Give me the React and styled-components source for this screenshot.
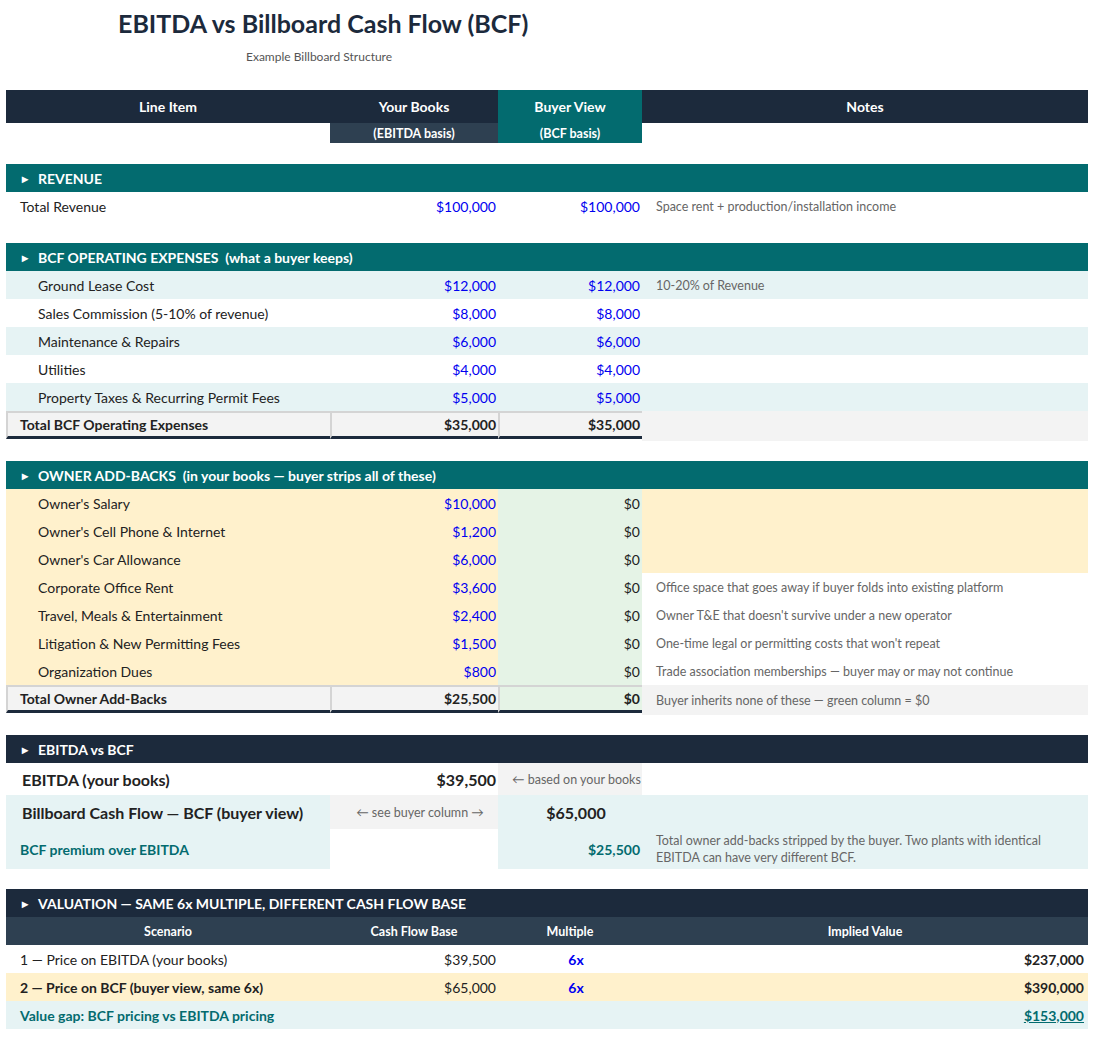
import React from 'react';
import styled, { createGlobalStyle, css } from 'styled-components';

const NAVY = '#1c2a3c';
const TEAL = '#036b6f';
const SLATE = '#2e4051';
const MINT = '#e6f3f4';
const CREAM = '#fff1cc';
const GREEN = '#e5f3e6';
const GRAY = '#f3f3f3';
const BLUE = '#0000f0';

const Global = createGlobalStyle`
  body { margin: 0; background: #fff; font-family: Lato, "Open Sans", sans-serif; color: #222; }
`;

const Page = styled.div`
  width: 1082px;
  padding: 0 8px 0 6px;
`;

const Title = styled.h1`
  margin: 0;
  padding: 8px 0 0 112px;
  font-size: 25px;
  font-weight: 700;
  color: ${NAVY};
  height: 36px;
`;

const Subtitle = styled.div`
  padding-left: 240px;
  font-size: 12px;
  color: #555;
  height: 46px;
  line-height: 26px;
`;

const Grid = styled.div`
  display: grid;
  grid-template-columns: 324px 168px 144px 446px;
  margin-bottom: ${p => p.$gap || 0}px;
`;

const Cell = styled.div`
  height: ${p => p.$h || 28}px;
  display: flex;
  align-items: center;
  justify-content: ${p => p.$align === 'right' ? 'flex-end' : p.$align === 'center' ? 'center' : 'flex-start'};
  padding: 0 ${p => p.$pr ?? 2}px 0 ${p => p.$pl ?? 14}px;
  box-sizing: border-box;
  background: ${p => p.$bg || 'transparent'};
  color: ${p => p.$color || '#222'};
  font-size: ${p => p.$size || 14}px;
  font-weight: ${p => p.$bold ? 700 : 400};
  white-space: nowrap;
  ${p => p.$total && css`
    border-top: 2px solid #d4d4d4;
    border-bottom: 3px solid ${NAVY};
    border-left: 2px solid #d4d4d4;
  `}
`;

const Note = styled(Cell)`
  color: #666;
  font-size: 12.5px;
  padding-left: 14px;
  white-space: ${p => p.$wrap ? 'normal' : 'nowrap'};
  line-height: 17px;
`;

const HeadCell = styled(Cell)`
  color: #fff;
  font-weight: 700;
  justify-content: center;
  padding: 0;
`;

const SectionBar = styled.div`
  height: 28px;
  background: ${p => p.$bg};
  color: #fff;
  font-weight: 700;
  font-size: 14px;
  display: flex;
  align-items: center;
  padding-left: 16px;
  gap: 10px;
  &::before { content: '▸'; font-size: 12px; }
`;

const Spacer = styled.div`
  height: ${p => p.$h}px;
`;

const Underline = styled.span`
  text-decoration: underline;
`;

const bgFor = (kind, col) => {
  if (kind === 'exp') return col === 3 ? 'transparent' : null;
  return null;
};

const expenses = [
  ['Ground Lease Cost', '$12,000', '$12,000', '10-20% of Revenue'],
  ['Sales Commission (5-10% of revenue)', '$8,000', '$8,000', ''],
  ['Maintenance & Repairs', '$6,000', '$6,000', ''],
  ['Utilities', '$4,000', '$4,000', ''],
  ['Property Taxes & Recurring Permit Fees', '$5,000', '$5,000', ''],
];

const addbacks = [
  ["Owner's Salary", '$10,000', ''],
  ["Owner's Cell Phone & Internet", '$1,200', ''],
  ["Owner's Car Allowance", '$6,000', ''],
  ['Corporate Office Rent', '$3,600', 'Office space that goes away if buyer folds into existing platform'],
  ['Travel, Meals & Entertainment', '$2,400', "Owner T&E that doesn't survive under a new operator"],
  ['Litigation & New Permitting Fees', '$1,500', "One-time legal or permitting costs that won't repeat"],
  ['Organization Dues', '$800', 'Trade association memberships — buyer may or may not continue'],
];

export default function App() {
  return (
    <Page>
      <Global />
      <Title>EBITDA vs Billboard Cash Flow (BCF)</Title>
      <Subtitle>Example Billboard Structure</Subtitle>

      <Grid>
        <HeadCell $h={33} $bg={NAVY}>Line Item</HeadCell>
        <HeadCell $h={33} $bg={NAVY}>Your Books</HeadCell>
        <HeadCell $h={33} $bg={TEAL}>Buyer View</HeadCell>
        <HeadCell $h={33} $bg={NAVY}>Notes</HeadCell>
        <Cell $h={20} />
        <HeadCell $h={20} $bg={SLATE} $size={12.5}>(EBITDA basis)</HeadCell>
        <HeadCell $h={20} $bg={TEAL} $size={12.5}>(BCF basis)</HeadCell>
        <Cell $h={20} />
      </Grid>
      <Spacer $h={21} />

      <SectionBar $bg={TEAL}>REVENUE</SectionBar>
      <Grid>
        <Cell>Total Revenue</Cell>
        <Cell $align="right" $color={BLUE}>$100,000</Cell>
        <Cell $align="right" $color={BLUE}>$100,000</Cell>
        <Note>Space rent + production/installation income</Note>
      </Grid>
      <Spacer $h={23} />

      <SectionBar $bg={TEAL}>BCF OPERATING EXPENSES&nbsp; (what a buyer keeps)</SectionBar>
      <Grid>
        {expenses.map(([l, a, b, n], i) => {
          const bg = i % 2 === 0 ? MINT : '#fff';
          return (
            <React.Fragment key={l}>
              <Cell $bg={bg} $pl={32}>{l}</Cell>
              <Cell $bg={bg} $align="right" $color={BLUE}>{a}</Cell>
              <Cell $bg={bg} $align="right" $color={BLUE}>{b}</Cell>
              <Note $bg={bg}>{n}</Note>
            </React.Fragment>
          );
        })}
        <Cell $total $bg={GRAY} $bold $pl={12}>Total BCF Operating Expenses</Cell>
        <Cell $total $bg={GRAY} $bold $align="right">$35,000</Cell>
        <Cell $total $bg={GRAY} $bold $align="right">$35,000</Cell>
        <Note $bg={GRAY} $h={30} />
      </Grid>
      <Spacer $h={20} />

      <SectionBar $bg={TEAL}>OWNER ADD-BACKS&nbsp; (in your books — buyer strips all of these)</SectionBar>
      <Grid>
        {addbacks.map(([l, a, n]) => (
          <React.Fragment key={l}>
            <Cell $bg={CREAM} $pl={32}>{l}</Cell>
            <Cell $bg={CREAM} $align="right" $color={BLUE}>{a}</Cell>
            <Cell $bg={GREEN} $align="right">$0</Cell>
            <Note $bg={n ? '#fff' : CREAM}>{n}</Note>
          </React.Fragment>
        ))}
        <Cell $total $bg={GRAY} $bold $pl={12}>Total Owner Add-Backs</Cell>
        <Cell $total $bg={GRAY} $bold $align="right">$25,500</Cell>
        <Cell $total $bg={GREEN} $bold $align="right">$0</Cell>
        <Note $bg={GRAY} $h={30}>Buyer inherits none of these — green column = $0</Note>
      </Grid>
      <Spacer $h={20} />

      <SectionBar $bg={NAVY}>EBITDA vs BCF</SectionBar>
      <Grid>
        <Cell $h={32} $bold $size={16} $pl={16}>EBITDA (your books)</Cell>
        <Cell $h={32} $bold $size={16} $align="right">$39,500</Cell>
        <Note $h={32} $bg={GRAY} $pl={4} $color="#666">← based on your books</Note>
        <Cell $h={32} />
        <Cell $h={34} $bg={MINT} $bold $size={16} $pl={16}>Billboard Cash Flow — BCF (buyer view)</Cell>
        <Note $h={34} $bg={GRAY} $pl={0} $align="center">← see buyer column →</Note>
        <Cell $h={34} $bg={MINT} $bold $size={16} $align="center">$65,000</Cell>
        <Cell $h={34} $bg={MINT} />
        <Cell $h={40} $bg={MINT} $bold $color={TEAL} $pl={14}>BCF premium over EBITDA</Cell>
        <Cell $h={40} />
        <Cell $h={40} $bg={MINT} $bold $color={TEAL} $align="right">$25,500</Cell>
        <Note $h={40} $bg={MINT} $wrap>Total owner add-backs stripped by the buyer. Two plants with identical EBITDA can have very different BCF.</Note>
      </Grid>
      <Spacer $h={20} />

      <SectionBar $bg={NAVY}>VALUATION — SAME 6x MULTIPLE, DIFFERENT CASH FLOW BASE</SectionBar>
      <Grid>
        <HeadCell $bg={SLATE} $size={12.5}>Scenario</HeadCell>
        <HeadCell $bg={SLATE} $size={12.5}>Cash Flow Base</HeadCell>
        <HeadCell $bg={SLATE} $size={12.5}>Multiple</HeadCell>
        <HeadCell $bg={SLATE} $size={12.5}>Implied Value</HeadCell>

        <Cell>1 — Price on EBITDA (your books)</Cell>
        <Cell $align="right">$39,500</Cell>
        <Cell $align="center" $bold $color={BLUE}>6x</Cell>
        <Cell $align="right" $bold $pr={4}>$237,000</Cell>

        <Cell $bg={CREAM} $bold>2 — Price on BCF (buyer view, same 6x)</Cell>
        <Cell $bg={CREAM} $align="right">$65,000</Cell>
        <Cell $bg={CREAM} $align="center" $bold $color={BLUE}>6x</Cell>
        <Cell $bg={CREAM} $align="right" $bold $pr={4}>$390,000</Cell>

        <Cell $bg={MINT} $bold $color={TEAL}>Value gap: BCF pricing vs EBITDA pricing</Cell>
        <Cell $bg={MINT} />
        <Cell $bg={MINT} />
        <Cell $bg={MINT} $align="right" $bold $pr={4} $color={TEAL}><Underline>$153,000</Underline></Cell>
      </Grid>
    </Page>
  );
}
